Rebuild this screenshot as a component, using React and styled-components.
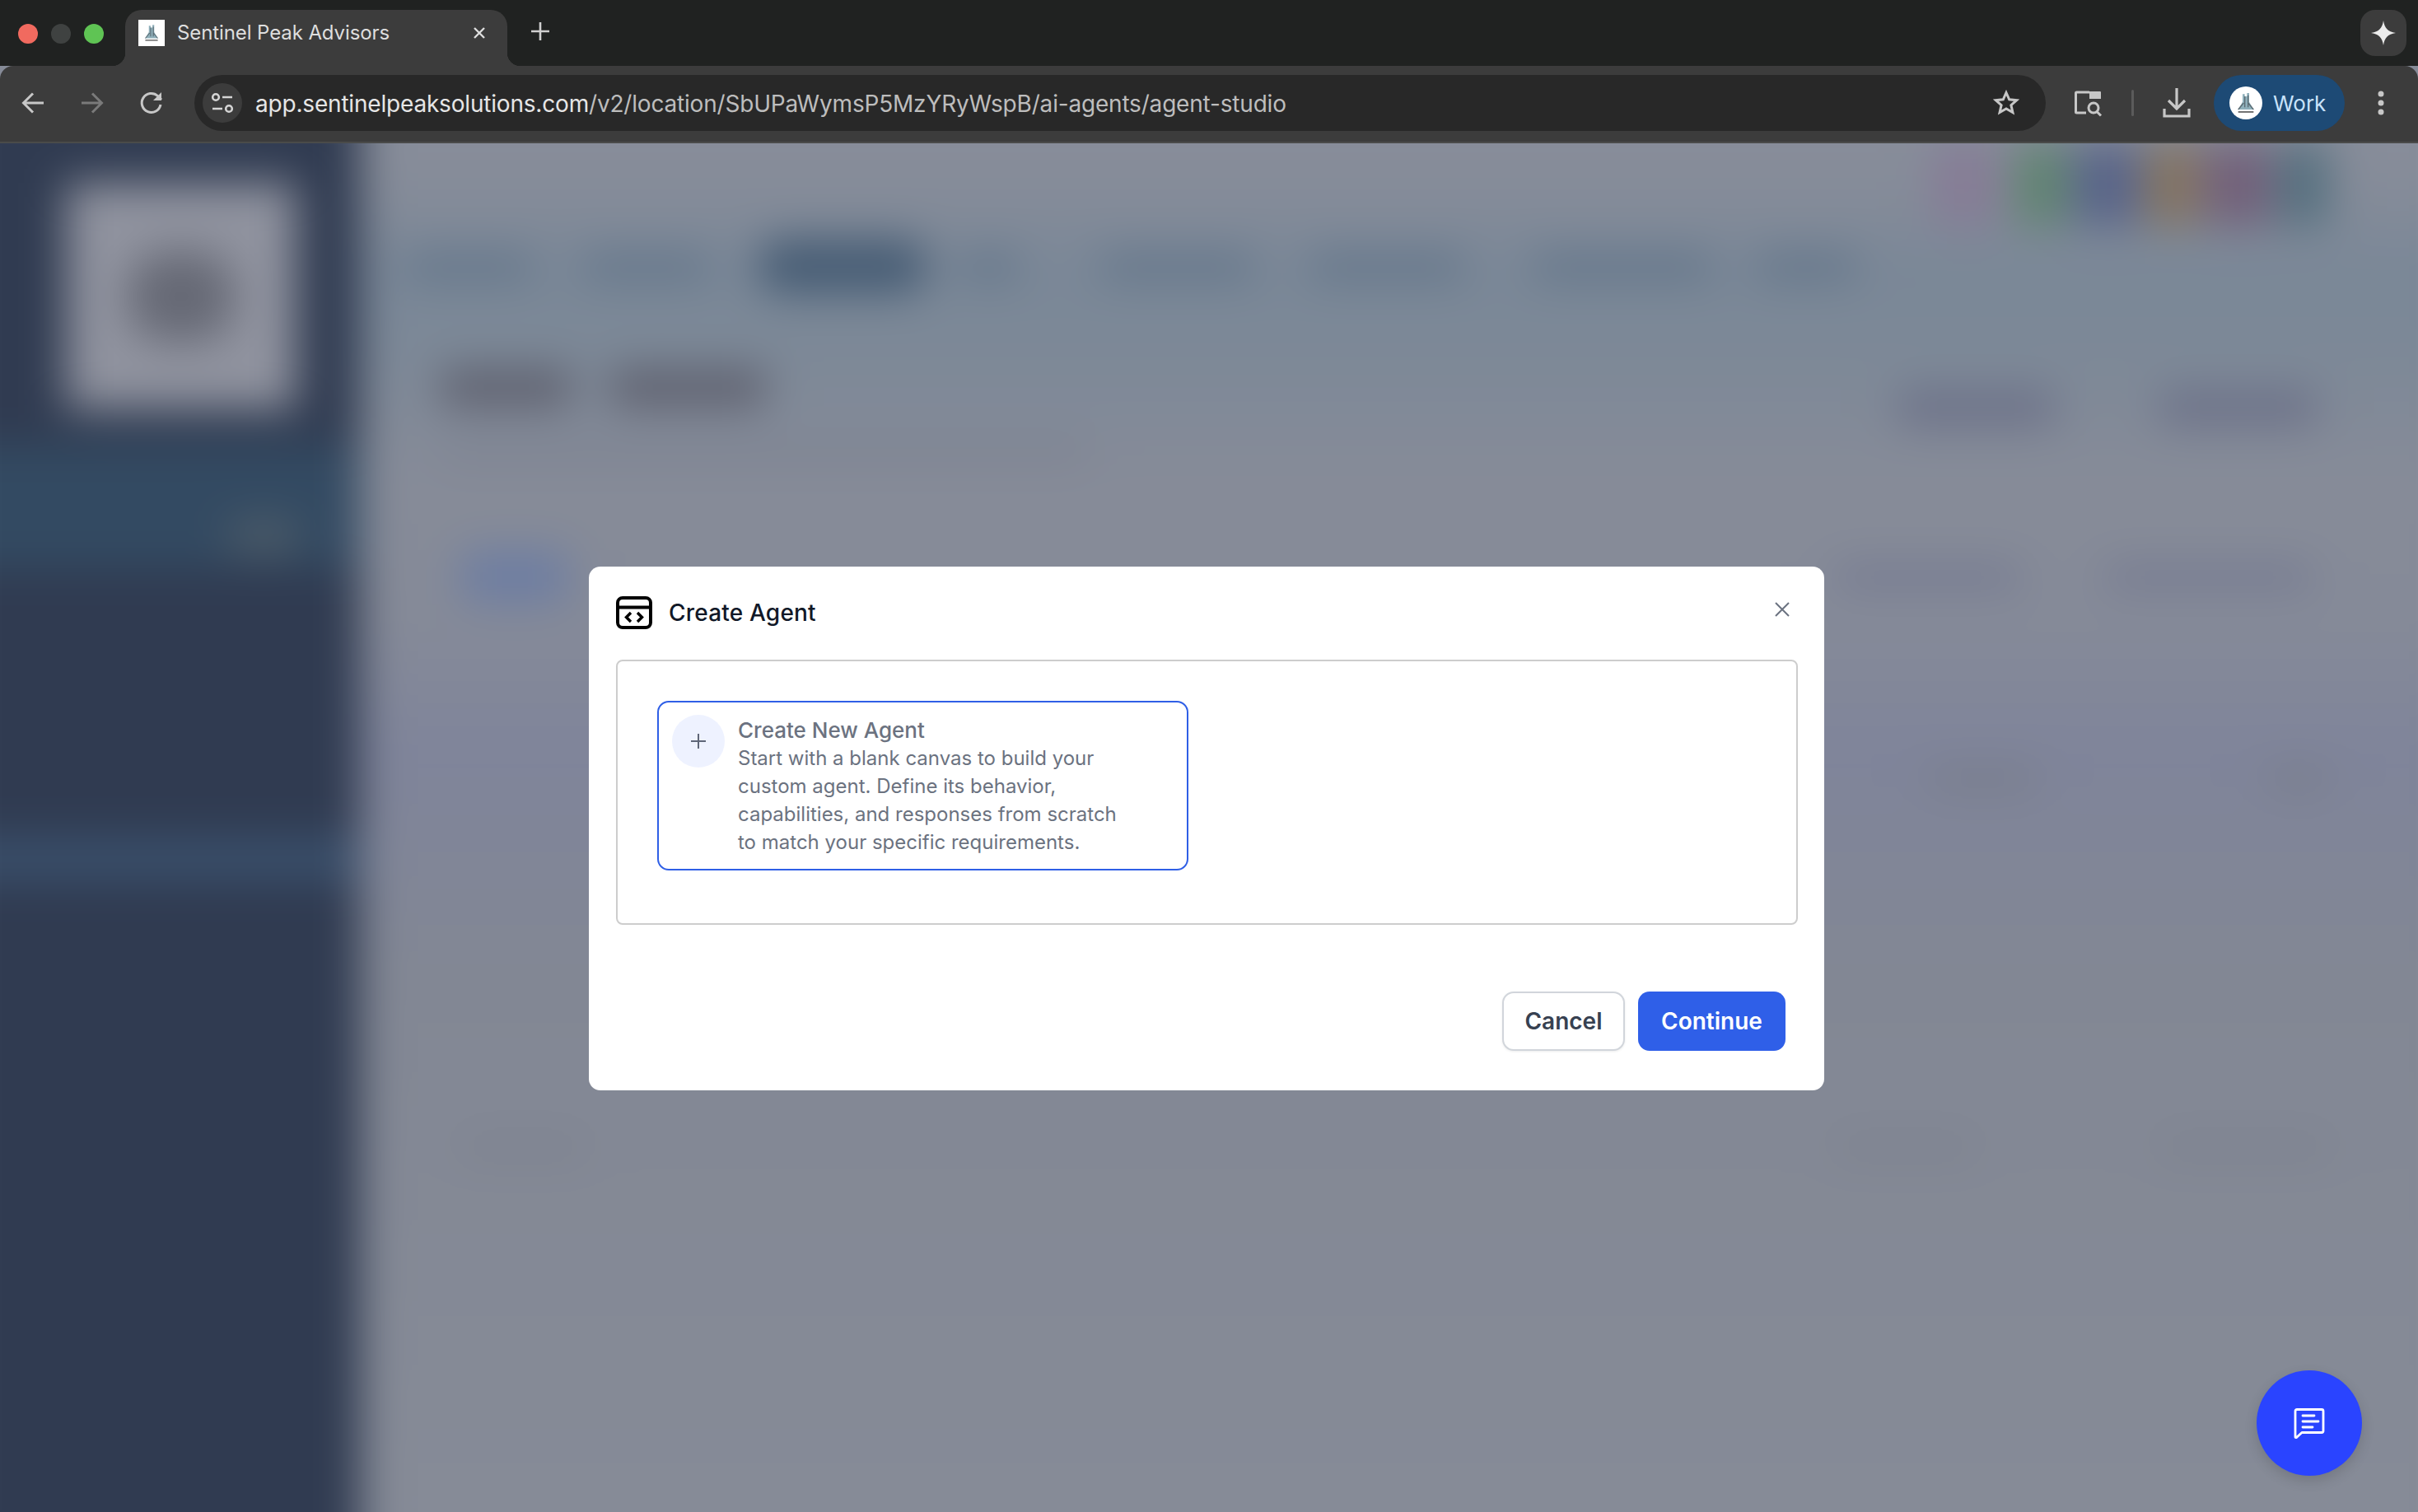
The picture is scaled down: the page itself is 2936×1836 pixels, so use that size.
import React from "react";
import styled, { createGlobalStyle } from "styled-components";

const Global = createGlobalStyle`
  html, body { margin: 0; padding: 0; width: 2936px; height: 1836px; overflow: hidden; background: #868b98; }
  #root { width: 2936px; height: 1836px; }
  * { box-sizing: border-box; }
`;

const Window = styled.div`
  width: 2936px; height: 1836px; display: flex; flex-direction: column;
  font-family: Inter, "Noto Sans", sans-serif; overflow: hidden;
`;
const TabStrip = styled.div`
  height: 80px; flex: none; background: #202221; display: flex; align-items: flex-end; padding-left: 22px;
`;
const Lights = styled.div`
  display: flex; gap: 16px; height: 78px; align-items: center; width: 130px; flex: none;
`;
const Light = styled.span`
  width: 24px; height: 24px; border-radius: 50%; background: ${p => p.$c};
`;
const Tab = styled.div`
  position: relative; width: 464px; height: 68px; background: #3c3c3c; border-radius: 20px 20px 0 0;
  display: flex; align-items: center; padding: 0 26px 13px 16px; color: #dedede; font-size: 24px; flex: none;
  &::before, &::after { content: ""; position: absolute; bottom: 0; width: 16px; height: 16px; }
  &::before { left: -16px; background: radial-gradient(circle at 0 0, transparent 16px, #3c3c3c 16.5px); }
  &::after { right: -16px; background: radial-gradient(circle at 100% 0, transparent 16px, #3c3c3c 16.5px); }
`;
const Favicon = styled.span`
  width: 32px; height: 32px; background: #fff; display: flex; align-items: center; justify-content: center; flex: none;
`;
const TabTitle = styled.span`
  margin-left: 15px; flex: 1; white-space: nowrap; letter-spacing: -0.1px;
`;
const NewTab = styled.span`
  display: flex; margin: 0 0 31px 29px; color: #d0d0d0;
`;
const StripSpacer = styled.div`flex: 1;`;
const GeminiButton = styled.div`
  width: 56px; height: 56px; background: #3c3c3c; border-radius: 18px; display: flex; align-items: center; justify-content: center;
  margin: 0 14px 12px 0;
`;
const Toolbar = styled.div`
  height: 94px; flex: none; background: #3c3c3c; border-bottom: 2px solid #4a4b4a; border-radius: 16px 16px 0 0;
  display: flex; align-items: center; padding: 0 0 2px 0; color: #c7c7c7;
`;
const NavIcon = styled.span`
  width: 36px; height: 36px; display: flex; align-items: center; justify-content: center; flex: none;
  margin-left: ${p => p.$ml}px; color: ${p => p.$c || "#c7c7c7"};
`;
const Omnibox = styled.div`
  width: 2248px; height: 68px; margin-left: 34px; background: #282828; border-radius: 34px; flex: none;
  display: flex; align-items: center; padding: 0 32px 0 10px;
`;
const TuneChip = styled.span`
  width: 48px; height: 48px; border-radius: 50%; background: #3c3c3c; display: flex; align-items: center; justify-content: center; flex: none;
`;
const Url = styled.div`
  margin-left: 16px; padding-top: 1px; flex: 1; font-size: 28px; white-space: nowrap; color: #bdbdbd; letter-spacing: -0.19px;
`;
const Domain = styled.span`color: #e6e6e6;`;
const Divider = styled.span`
  width: 3px; height: 32px; background: #5b5b5b; border-radius: 2px; margin-left: 34px; flex: none;
`;
const Profile = styled.div`
  width: 159px; height: 68px; margin-left: 27px; border-radius: 34px; background: #1d4a75; display: flex; align-items: center;
  padding-left: 19px; flex: none;
`;
const Avatar = styled.span`
  width: 40px; height: 40px; border-radius: 50%; background: #fff; display: flex; align-items: center; justify-content: center; flex: none;
`;
const ProfileName = styled.span`
  margin-left: 13px; color: #c9e3fb; font-size: 26px;
`;
const Viewport = styled.div`
  position: relative; flex: 1; overflow: hidden; background: #868b98;
`;

/* blurred application page behind the dialog */
const BlurredPage = styled.div`
  display: flex; height: calc(100% + 120px); margin: -60px -60px; filter: blur(26px);
  background: linear-gradient(180deg, #888d9a 0%, #868c99 6%, #7a8797 12%, #7c8897 17%, #868b98 26%, #858a98 36%, #7f849a 45%, #828794 60%, #868b97 100%);
`;
const Sidebar = styled.aside`
  width: 497px; flex: none; background: #303b51; display: flex; flex-direction: column; padding: 108px 77px 0 140px;
`;
const SidebarLogo = styled.div`
  width: 280px; height: 275px; background: #90939f; display: flex; align-items: center; justify-content: center; flex: none;
`;
const LogoMark = styled.div`
  width: 130px; height: 110px; border-radius: 50px; background: #666975;
`;
const AccountBand = styled.div`
  height: 150px; margin: 43px -77px 0 -140px; background: #334a62; display: flex; align-items: center; justify-content: flex-end;
  padding: 72px 72px 0 0; flex: none;
`;
const AccountDot = styled.span`
  width: 90px; height: 40px; border-radius: 20px; background: #4f5d69;
`;
const ActiveNav = styled.div`
  height: 52px; margin: 327px -77px 0 -140px; background: #3a506c; flex: none;
`;
const Main = styled.main`
  flex: 1; display: flex; flex-direction: column; padding: 60px 168px 0 31px;
`;
const TopIcons = styled.div`
  height: 110px; display: flex; justify-content: flex-end; align-items: flex-start; flex: none; gap: ${p => p.$gap}px;
`;
const Swatch = styled.span`
  width: ${p => p.$w}px; height: 100px; background: ${p => p.$c}; margin-right: ${p => p.$mr || 0}px;
`;
const NavRow = styled.div`
  height: 66px; margin-top: 6px; display: flex; align-items: center; flex: none;
`;
const NavBlob = styled.span`
  width: ${p => p.$w}px; height: ${p => p.$active ? 66 : 34}px; margin-left: ${p => p.$ml}px;
  background: ${p => p.$active ? "#465c74" : "#64768a"}; border-radius: 30px; flex: none;
`;
const TitleRow = styled.div`
  margin-top: 92px; display: flex; justify-content: space-between; align-items: flex-start; padding: 0 0 0 67px; flex: none;
`;
const TitleCol = styled.div`display: flex; flex-direction: column; gap: 48px;`;
const TitleWords = styled.div`display: flex; gap: 45px;`;
const TitleBlob = styled.span`
  width: ${p => p.$w}px; height: 46px; border-radius: 10px; background: #5e606e;
`;
const SubBlob = styled.span`
  width: 786px; height: 14px; border-radius: 8px; background: #787d8c;
`;
const HeadActions = styled.div`display: flex; gap: 127px; margin: 25px 15px 0 0;`;
const HeadAction = styled.span`
  width: 191px; height: 44px; border-radius: 10px; background: #6c7188;
`;
const ContentRow = styled.div`
  margin-top: ${p => p.$mt}px; height: 60px; display: flex; justify-content: space-between; align-items: center; padding-left: 92px; flex: none;
`;
const Blob = styled.span`
  width: ${p => p.$w}px; height: ${p => p.$h || 24}px; background: ${p => p.$c}; border-radius: 10px; flex: none;
`;
const BlobGroup = styled.div`
  display: flex; gap: ${p => p.$gap}px; align-items: center; margin-right: ${p => p.$mr || 0}px;
`;

/* dialog */
const Overlay = styled.div`
  position: absolute; inset: 0; display: flex; align-items: center; justify-content: center; padding: 2px 6px 0 0;
`;
const Dialog = styled.div`
  width: 1500px; height: 636px; background: #fff; border-radius: 14px; display: flex; flex-direction: column; padding: 36px 32px 0 33px;
`;
const DialogHead = styled.div`
  position: relative; height: 40px; display: flex; align-items: center; gap: 20px; flex: none;
`;
const DialogTitle = styled.h2`
  margin: 0; font-size: 28px; font-weight: 500; color: #111827; letter-spacing: 0.2px;
`;
const CloseBtn = styled.span`
  position: absolute; right: 9px; top: 6px; width: 20px; height: 20px; color: #6b7280; display: flex;
`;
const OptionsBox = styled.div`
  height: 322px; margin-top: 37px; border: 2px solid #cdcdcd; border-radius: 8px; padding: 48px; flex: none;
`;
const OptionCard = styled.div`
  width: 645px; height: 206px; border: 2px solid #2f5fe6; border-radius: 14px; display: flex; padding: 17px 16px; gap: 16px;
`;
const OptionIcon = styled.span`
  width: 64px; height: 64px; margin-top: -2px; border-radius: 50%; background: #eef2ff; color: #5f6678; display: flex; align-items: center; justify-content: center; flex: none;
`;
const OptionText = styled.div`
  display: flex; flex-direction: column; color: #6b7280;
`;
const OptionTitle = styled.span`
  font-size: 26px; line-height: 34px; font-weight: 500; color: #6b7280; height: 34px;
`;
const OptionDesc = styled.p`
  margin: 0; font-size: 24px; line-height: 34px; white-space: pre-line;
`;
const Footer = styled.div`
  margin-top: 81px; display: flex; justify-content: flex-end; gap: 16px; padding-right: 15px;
`;
const Button = styled.button`
  height: 72px; width: ${p => p.$w}px; border-radius: 14px; font: 600 28px Inter, sans-serif; cursor: pointer;
  background: ${p => p.$primary ? "#2f5fe8" : "#fff"}; color: ${p => p.$primary ? "#fff" : "#374151"};
  border: ${p => p.$primary ? "none" : "2px solid #d1d5db"};
  box-shadow: ${p => p.$primary ? "none" : "0 1px 3px rgba(0,0,0,.08)"}; padding: 0;
`;
const ChatFab = styled.div`
  position: absolute; left: 2740px; top: 1490px; width: 128px; height: 128px; border-radius: 50%; background: #2a44ff;
  display: flex; align-items: center; justify-content: center; box-shadow: 0 6px 16px rgba(0,0,0,.14);
`;

const TinyLogo = ({ s = 24 }) => (
  <svg width={s} height={s} viewBox="0 0 24 24">
    <path d="M9 4h2v2h2V3h2v8l4 7H5l4-7z" fill="#8fb0bb" />
    <path d="M11 6v10M14 5v11M5 18l5-6M19 18l-5-6" stroke="#5a6a72" strokeWidth="1" fill="none" />
    <rect x="5" y="19.5" width="14" height="1.4" fill="#6a6a6a" />
  </svg>
);

const Chevron = ({ flip }) => (
  <svg width="36" height="36" viewBox="0 0 36 36" fill="none" stroke="currentColor" strokeWidth="3" style={flip ? { transform: "scaleX(-1)" } : undefined}>
    <path d="M31 18H7M18 6.500 6.500 18 18 29.500" />
  </svg>
);

export default function App() {
  return (
    <Window>
      <Global />
      <TabStrip>
        <Lights>
          <Light $c="#f16a5f" />
          <Light $c="#3f4241" />
          <Light $c="#5fc454" />
        </Lights>
        <Tab>
          <Favicon><TinyLogo s={26} /></Favicon>
          <TabTitle>Sentinel Peak Advisors</TabTitle>
          <svg width="16" height="16" viewBox="0 0 16 16" stroke="#dedede" strokeWidth="2.400" fill="none"><path d="M2 2l12 12M14 2 2 14" /></svg>
        </Tab>
        <NewTab>
          <svg width="22" height="22" viewBox="0 0 22 22" stroke="currentColor" strokeWidth="2.600"><path d="M11 0v22M0 11h22" /></svg>
        </NewTab>
        <StripSpacer />
        <GeminiButton>
          <svg width="34" height="34" viewBox="0 0 34 34"><path d="M17 2c1.500 9 5 13.500 15 15-10 1.500-13.500 6-15 15-1.500-9-5-13.500-15-15 10-1.500 13.500-6 15-15z" fill="#ececec" /></svg>
        </GeminiButton>
      </TabStrip>
      <Toolbar>
        <NavIcon $ml={22}><Chevron /></NavIcon>
        <NavIcon $ml={36} $c="#7a7a7a"><Chevron flip /></NavIcon>
        <NavIcon $ml={36}>
          <svg width="36" height="36" viewBox="0 0 36 36" fill="none" stroke="currentColor" strokeWidth="3"><path d="M29 20a11.500 11.500 0 1 1-3.500-10.500L30 14" /><path d="M30 5v10H20" fill="currentColor" stroke="none" /></svg>
        </NavIcon>
        <Omnibox>
          <TuneChip>
            <svg width="28" height="28" viewBox="0 0 28 28" fill="none" stroke="#d4d4d4" strokeWidth="2.600"><circle cx="6" cy="7" r="3.800" /><path d="M14 7h12M2 21h12" /><circle cx="22" cy="21" r="3.800" /></svg>
          </TuneChip>
          <Url><Domain>app.sentinelpeaksolutions.com</Domain>/v2/location/SbUPaWymsP5MzYRyWspB/ai-agents/agent-studio</Url>
          <svg width="32" height="32" viewBox="0 0 32 32" fill="none" stroke="#c7c7c7" strokeWidth="3" strokeLinejoin="miter"><path d="M16 3.500l3.700 8.300 9 .9-6.800 6 2 8.800-7.900-4.600-7.900 4.600 2-8.800-6.800-6 9-.9z" /></svg>
        </Omnibox>
        <NavIcon $ml={34}>
          <svg width="36" height="36" viewBox="0 0 36 36" fill="none" stroke="currentColor" strokeWidth="3"><path d="M15 30H3.500a1 1 0 0 1-1-1V6a1 1 0 0 1 1-1H19" /><path d="M19 4h13a1 1 0 0 1 1 1v8H19z" fill="currentColor" stroke="none" /><circle cx="24" cy="24" r="6" /><path d="M28 28.500l5 5" /></svg>
        </NavIcon>
        <Divider />
        <NavIcon $ml={34}>
          <svg width="34" height="38" viewBox="0 0 34 38" fill="none" stroke="currentColor" strokeWidth="3.200"><path d="M17 1v24M7 16l10 10 10-10" /><path d="M2 26v9h30v-9" /></svg>
        </NavIcon>
        <Profile>
          <Avatar><TinyLogo s={32} /></Avatar>
          <ProfileName>Work</ProfileName>
        </Profile>
        <NavIcon $ml={26}>
          <svg width="8" height="32" viewBox="0 0 8 32" fill="currentColor"><circle cx="4" cy="5" r="3.500" /><circle cx="4" cy="16" r="3.500" /><circle cx="4" cy="27" r="3.500" /></svg>
        </NavIcon>
      </Toolbar>
      <Viewport>
        <BlurredPage aria-hidden="true">
          <Sidebar>
            <SidebarLogo><LogoMark /></SidebarLogo>
            <AccountBand><AccountDot /></AccountBand>
            <ActiveNav />
          </Sidebar>
          <Main>
            <TopIcons $gap={8}>
              <Swatch $w={80} $c="#867c96" $mr={12} />
              <Swatch $w={63} $c="#5f8470" />
              <Swatch $w={80} $c="#586489" />
              <Swatch $w={63} $c="#84735f" />
              <Swatch $w={80} $c="#72607a" />
              <Swatch $w={63} $c="#55707f" />
            </TopIcons>
            <NavRow>
              <NavBlob $w={160} $ml={22} />
              <NavBlob $w={160} $ml={55} />
              <NavBlob $w={206} $ml={55} $active />
              <NavBlob $w={75} $ml={37} />
              <NavBlob $w={191} $ml={96} />
              <NavBlob $w={192} $ml={63} />
              <NavBlob $w={223} $ml={79} />
              <NavBlob $w={127} $ml={48} />
            </NavRow>
            <TitleRow>
              <TitleCol>
                <TitleWords>
                  <TitleBlob $w={160} />
                  <TitleBlob $w={190} />
                </TitleWords>
                <SubBlob />
              </TitleCol>
              <HeadActions>
                <HeadAction />
                <HeadAction />
              </HeadActions>
            </TitleRow>
            <ContentRow $mt={114}>
              <Blob $w={130} $h={64} $c="#6d7da2" />
              <BlobGroup $gap={103} $mr={20}>
                <Blob $w={225} $c="#71768f" />
                <Blob $w={252} $c="#71768f" />
              </BlobGroup>
            </ContentRow>
            <ContentRow $mt={186}>
              <span />
              <BlobGroup $gap={280}>
                <Blob $w={132} $c="#767b88" />
                <Blob $w={75} $c="#767b88" />
              </BlobGroup>
            </ContentRow>
            <ContentRow $mt={389}>
              <Blob $w={150} $h={18} $c="#7a7f8c" />
              <BlobGroup $gap={224}>
                <Blob $w={169} $h={18} $c="#7a7f8c" />
                <Blob $w={206} $h={18} $c="#7a7f8c" />
              </BlobGroup>
            </ContentRow>
          </Main>
        </BlurredPage>
        <Overlay>
          <Dialog>
            <DialogHead>
              <svg width="44" height="40" viewBox="0 0 44 40" fill="none" stroke="#000" strokeWidth="4"><rect x="2" y="2" width="40" height="36" rx="6" /><path d="M2 13.500h40" /><path d="M18 20l-5.500 5.500L18 31M26 20l5.500 5.500L26 31" strokeWidth="3.400" /></svg>
              <DialogTitle>Create Agent</DialogTitle>
              <CloseBtn>
                <svg width="20" height="20" viewBox="0 0 20 20" stroke="currentColor" strokeWidth="2" fill="none"><path d="M2 2l16 16M18 2 2 18" /></svg>
              </CloseBtn>
            </DialogHead>
            <OptionsBox>
              <OptionCard>
                <OptionIcon>
                  <svg width="20" height="20" viewBox="0 0 20 20" stroke="currentColor" strokeWidth="2"><path d="M10 1v18M1 10h18" /></svg>
                </OptionIcon>
                <OptionText>
                  <OptionTitle>Create New Agent</OptionTitle>
                  <OptionDesc>{"Start with a blank canvas to build your\ncustom agent. Define its behavior,\ncapabilities, and responses from scratch\nto match your specific requirements."}</OptionDesc>
                </OptionText>
              </OptionCard>
            </OptionsBox>
            <Footer>
              <Button $w={149}>Cancel</Button>
              <Button $w={179} $primary>Continue</Button>
            </Footer>
          </Dialog>
        </Overlay>
        <ChatFab>
          <svg width="38" height="38" viewBox="0 0 38 38" fill="none" stroke="#fff" strokeWidth="2.800" strokeLinecap="round" strokeLinejoin="round"><path d="M4 2.500h30a2 2 0 0 1 2 2v24a2 2 0 0 1-2 2H10l-6.500 6a1 1 0 0 1-1.500-.5V4.500a2 2 0 0 1 2-2z" /><path d="M11 10h14M11 17h19M11 24h12" /></svg>
        </ChatFab>
      </Viewport>
    </Window>
  );
}
